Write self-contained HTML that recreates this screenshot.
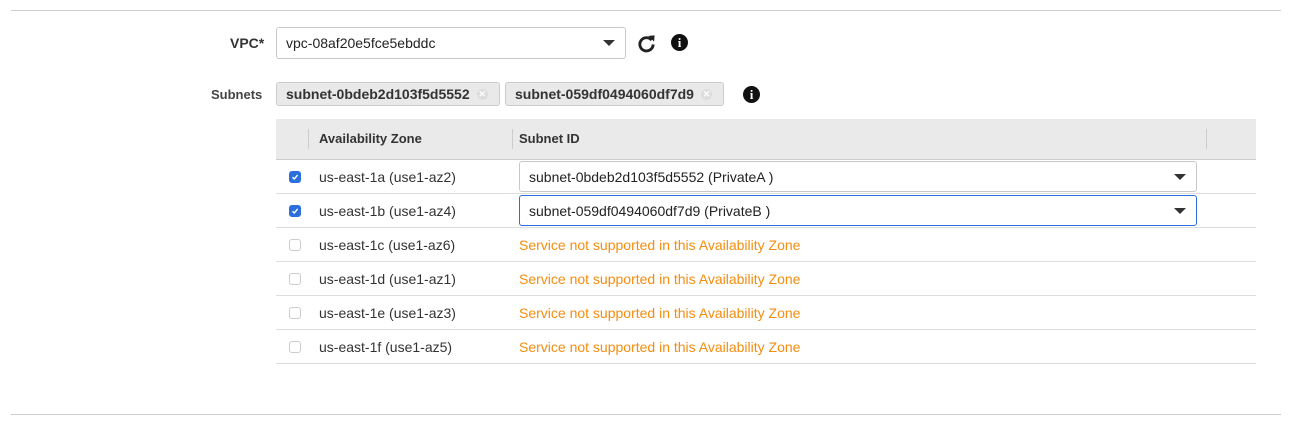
<!DOCTYPE html>
<html><head><style>
*{box-sizing:border-box;margin:0;padding:0}
body{width:1307px;height:430px;background:#fff;font-family:"Liberation Sans",Arial,sans-serif;font-size:14px;color:#333;position:relative;overflow:hidden}
.abs{position:absolute}
.hr{position:absolute;left:11px;width:1270px;height:1px;background:#ccc}
.sel{position:absolute;border:1px solid #c8c8c8;border-radius:3px;background:#fff;padding-left:9px;display:flex;align-items:center;color:#222}
.caret{position:absolute;right:10px;top:50%;margin-top:-3px;width:0;height:0;border-left:6px solid transparent;border-right:6px solid transparent;border-top:6px solid #333}
.tag{position:absolute;top:82px;height:24px;border:1px solid #ccc;border-radius:3px;background:#e9e9e9;font-weight:bold;color:#333;padding-left:9px;display:flex;align-items:center}
.x{display:inline-block;width:11px;height:11px;border-radius:50%;background:#ddd;color:#fff;font-size:9px;line-height:11px;text-align:center;margin-left:7px}
.row{position:absolute;left:276px;width:980px;height:34px;border-bottom:1px solid #ddd}
.cb{position:absolute;left:13px;top:11px;width:12px;height:12px;border:1px solid #ccc;border-radius:3px;background:#fff}
.cb.on{background:#2a6fdc;border-color:#2a6fdc}
.az{position:absolute;left:43px;top:9px;color:#333}
.warn{position:absolute;left:243px;top:9px;color:#f38d10}
.info{position:absolute;width:17px;height:17px;border-radius:50%;background:#111;color:#fff;font:bold 13px "Liberation Serif",serif;text-align:center;line-height:17px}
</style></head><body>
<div class="hr" style="top:10px"></div>
<div class="hr" style="top:414px"></div>

<div class="abs" style="left:230px;top:35px;font-weight:bold">VPC*</div>
<div class="sel" style="left:276px;top:27px;width:350px;height:32px">vpc-08af20e5fce5ebddc<span class="caret"></span></div>
<svg class="abs" style="left:637px;top:34px" width="19" height="19" viewBox="0 0 20 20"><path d="M15.5 6.5A7 7 0 1 0 17 11" fill="none" stroke="#222" stroke-width="3"/><path d="M12 2 L18.5 1.5 L18 8 Z" fill="#222"/></svg>
<div class="info" style="left:671px;top:34px">i</div>

<div class="abs" style="left:211px;top:87px;font-size:13px;font-weight:bold;color:#444">Subnets</div>
<div class="tag" style="left:276px;width:224px">subnet-0bdeb2d103f5d5552<span class="x">✕</span></div>
<div class="tag" style="left:505px;width:219px">subnet-059df0494060df7d9<span class="x">✕</span></div>
<div class="info" style="left:743px;top:86px">i</div>

<div class="abs" style="left:276px;top:119px;width:980px;height:41px;background:#eaeaea;border-bottom:1px solid #ccc"></div>
<div class="abs" style="left:308px;top:129px;width:1px;height:20px;background:#ccc"></div>
<div class="abs" style="left:512px;top:129px;width:1px;height:20px;background:#ccc"></div>
<div class="abs" style="left:1206px;top:129px;width:1px;height:20px;background:#ccc"></div>
<div class="abs" style="left:319px;top:131px;font-weight:bold;font-size:13px">Availability Zone</div>
<div class="abs" style="left:519px;top:131px;font-weight:bold;font-size:13px">Subnet ID</div>

<div class="row" style="top:160px"><div class="cb on"><svg width="10" height="10" viewBox="0 0 10 10" style="position:absolute;left:0;top:0"><path d="M2.5 5.2 L4.3 7 L7.6 3" fill="none" stroke="#fff" stroke-width="1.4"/></svg></div><div class="az">us-east-1a (use1-az2)</div>
<div class="sel" style="left:243px;top:1px;width:678px;height:31px;position:absolute">subnet-0bdeb2d103f5d5552 (PrivateA )<span class="caret"></span></div></div>
<div class="row" style="top:194px"><div class="cb on"><svg width="10" height="10" viewBox="0 0 10 10" style="position:absolute;left:0;top:0"><path d="M2.5 5.2 L4.3 7 L7.6 3" fill="none" stroke="#fff" stroke-width="1.4"/></svg></div><div class="az">us-east-1b (use1-az4)</div>
<div class="sel" style="left:243px;top:1px;width:678px;height:31px;position:absolute;border-color:#2a6fdc">subnet-059df0494060df7d9 (PrivateB )<span class="caret"></span></div></div>
<div class="row" style="top:228px"><div class="cb"></div><div class="az">us-east-1c (use1-az6)</div><div class="warn">Service not supported in this Availability Zone</div></div>
<div class="row" style="top:262px"><div class="cb"></div><div class="az">us-east-1d (use1-az1)</div><div class="warn">Service not supported in this Availability Zone</div></div>
<div class="row" style="top:296px"><div class="cb"></div><div class="az">us-east-1e (use1-az3)</div><div class="warn">Service not supported in this Availability Zone</div></div>
<div class="row" style="top:330px"><div class="cb"></div><div class="az">us-east-1f (use1-az5)</div><div class="warn">Service not supported in this Availability Zone</div></div>
</body></html>
